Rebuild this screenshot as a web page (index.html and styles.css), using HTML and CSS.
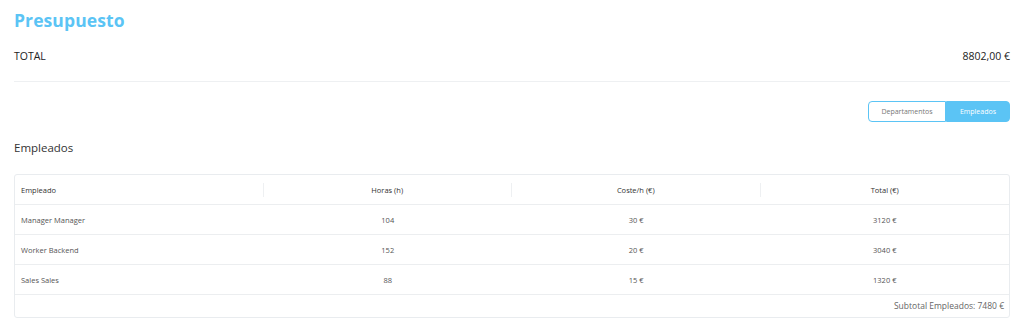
FILE: index.html
```html
<!DOCTYPE html>
<html lang="es">
<head>
<meta charset="utf-8">
<link rel="stylesheet" href="styles.css">
</head>
<body>
<div class="page">
  <h1 class="title">Presupuesto</h1>
  <div class="total-row">
    <span class="total-label">TOTAL</span>
    <span class="total-value">8802,00 €</span>
  </div>
  <div class="toggle-row">
    <div class="toggle">
      <button class="tg">Departamentos</button>
      <button class="tg active">Empleados</button>
    </div>
  </div>
  <h2 class="section">Empleados</h2>
  <div class="table">
    <div class="tr head">
      <div class="td left">Empleado</div>
      <div class="td">Horas (h)</div>
      <div class="td">Coste/h (€)</div>
      <div class="td">Total (€)</div>
    </div>
    <div class="tr">
      <div class="td left">Manager Manager</div>
      <div class="td">104</div>
      <div class="td">30 €</div>
      <div class="td">3120 €</div>
    </div>
    <div class="tr">
      <div class="td left">Worker Backend</div>
      <div class="td">152</div>
      <div class="td">20 €</div>
      <div class="td">3040 €</div>
    </div>
    <div class="tr">
      <div class="td left">Sales Sales</div>
      <div class="td">88</div>
      <div class="td">15 €</div>
      <div class="td">1320 €</div>
    </div>
    <div class="subtotal">Subtotal Empleados: 7480 €</div>
  </div>
</div>
</body>
</html>
```
FILE: styles.css
```css
* { box-sizing: border-box; }
html, body { margin: 0; padding: 0; background: #fff; }
body { font-family: "Open Sans", "Liberation Sans", sans-serif; color: #333; }
.page { padding: 8px 14px 0 14px; }
.title {
  margin: 0;
  font-size: 17.5px;
  font-weight: 700;
  color: #5bc4f5;
  line-height: 24px;
  letter-spacing: 0.1px;
}
.total-row {
  display: flex;
  justify-content: space-between;
  align-items: center;
  margin-top: 12px;
  height: 24px;
  border-bottom: 1px solid #eef0f2;
  padding-bottom: 13px;
  box-sizing: content-box;
  font-size: 10.5px;
  color: #222;
}
.total-value { font-size: 10.5px; font-weight: 500; }
.toggle-row { display: flex; justify-content: flex-end; margin-top: 19px; }
.toggle { display: flex; }
.tg {
  font-family: "Open Sans", "Liberation Sans", sans-serif;
  font-size: 7px;
  height: 21px;
  border: 1px solid #5bc4f5;
  background: #fff;
  color: #777;
  padding: 0;
  width: 78px;
  border-radius: 4px 0 0 4px;
}
.tg.active {
  background: #5bc4f5;
  color: #fff;
  width: 64px;
  border-radius: 0 4px 4px 0;
}
.section {
  margin: 18px 0 0 0;
  font-size: 11.5px;
  font-weight: 500;
  color: #333;
  line-height: 16px;
}
.table {
  margin-top: 18px;
  border: 1px solid #e9ecef;
  border-radius: 3px;
  font-size: 7.5px;
  color: #555;
}
.tr {
  display: grid;
  grid-template-columns: repeat(4, 1fr);
  height: 30px;
  border-bottom: 1px solid #eceef0;
  align-items: center;
  padding-top: 1px;
}
.td { text-align: center; padding: 0 6px; }
.td.left { text-align: left; }
.head { color: #333; font-weight: 500; }
.head .td { border-right: 1px solid #eef0f2; height: 14px; line-height: 14px; }
.head .td:last-child { border-right: none; }
.subtotal {
  text-align: right;
  height: 22px;
  line-height: 22px;
  padding-right: 5px;
  font-size: 8.5px;
  color: #666;
}
```
